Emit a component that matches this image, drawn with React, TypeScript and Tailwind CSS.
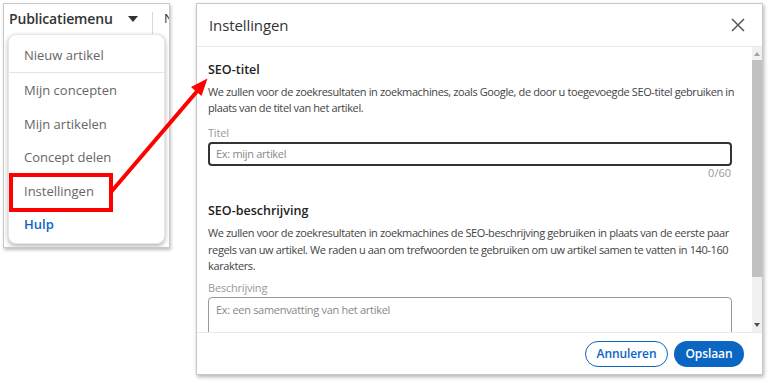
import React from "react";

const font = { fontFamily: '"Open Sans", "Noto Sans", sans-serif' };

function Caret() {
  return (
    <svg width="10" height="6" viewBox="0 0 10 6">
      <path d="M0 0 L10 0 L5 6 Z" fill="#333" />
    </svg>
  );
}

function LeftPanel() {
  const items = ["Mijn concepten", "Mijn artikelen", "Concept delen", "Instellingen"];
  return (
    <div className="w-[167px] h-[245px] border border-[#c8c8c8] bg-white shadow-[1px_2px_3px_rgba(0,0,0,0.25)] flex flex-col overflow-hidden shrink-0">
      <div className="h-[29px] flex items-end shrink-0">
        <div className="w-[148px] h-[29px] flex items-center pl-[5px] shrink-0">
          <span className="w-[119px] text-[14px] font-semibold text-[#333] leading-5 tracking-[-0.15px] whitespace-nowrap">Publicatiemenu</span>
          <Caret />
        </div>
        <div className="w-px h-[23px] bg-[#d8d8d8] shrink-0 mb-[-2px]"></div>
        <div className="h-[29px] flex items-center pl-[11px] text-[13px] text-[#333] shrink-0">N</div>
      </div>
      <div className="mt-px ml-[4px] w-[157px] h-[210px] rounded-[8px] bg-white border border-[#e6e6e6] shadow-[0_2px_5px_rgba(0,0,0,0.3)] flex flex-col shrink-0">
        <div className="h-[37px] pt-[10px] pl-[15px] text-[13px] leading-5 text-[#666]">Nieuw artikel</div>
        <div className="h-px bg-[#e4e4e4]"></div>
        <div className="pt-[1px] flex flex-col">
          {items.map((t) => (
            <div key={t} className="h-[33.5px] flex items-center pl-[15px] text-[13px] text-[#666]">
              {t}
            </div>
          ))}
          <div className="h-[33.5px] flex items-center pl-[15px] text-[13px] font-semibold text-[#0a66c2]">Hulp</div>
        </div>
      </div>
    </div>
  );
}

function Scrollbar() {
  return (
    <div className="w-[10px] bg-[#f1f1f1] flex flex-col items-center shrink-0">
      <div className="h-[13px] flex items-center justify-center">
        <svg width="6" height="4" viewBox="0 0 6 4"><path d="M0 4 L6 4 L3 0 Z" fill="#a3a3a3" /></svg>
      </div>
      <div className="w-[10px] h-[217px] bg-[#c1c1c1]"></div>
      <div className="flex-1"></div>
      <div className="h-[14px] flex items-center justify-center">
        <svg width="6" height="4" viewBox="0 0 6 4"><path d="M0 0 L6 0 L3 4 Z" fill="#505050" /></svg>
      </div>
    </div>
  );
}

const para = "mr-[-4px] text-[11px] tracking-[-0.38px] text-[#444]";

function Modal() {
  return (
    <div className="w-[567px] h-[372px] border border-[#c8c8c8] bg-white shadow-[1px_2px_4px_rgba(0,0,0,0.3)] flex flex-col shrink-0">
      <div className="h-[43px] flex items-center justify-between pl-[12px] pr-[17px] border-b border-[#e8e8e8] shrink-0">
        <span className="text-[15px] text-[#333] tracking-[-0.1px]">Instellingen</span>
        <svg width="14" height="14" viewBox="0 0 14 14">
          <path d="M1 1 L13 13 M13 1 L1 13" stroke="#555" strokeWidth="1.5" />
        </svg>
      </div>
      <div className="flex-1 flex min-h-0">
        <div className="flex-1 pl-[11px] pr-[20px] overflow-hidden">
          <div className="pt-[13px] text-[12.5px] font-semibold leading-5 text-[#222]">SEO-titel</div>
          <p className={`mt-[4px] leading-4 ${para}`}>
            We zullen voor de zoekresultaten in zoekmachines, zoals Google, de door u toegevoegde SEO-titel gebruiken in plaats van de titel van het artikel.
          </p>
          <div className="mt-[9px] text-[11px] tracking-[-0.2px] leading-4 text-[#999]">Titel</div>
          <div className="mt-[1px] h-[24px] border-2 border-[#333] rounded-[4px] flex items-center pl-[6px] text-[11px] tracking-[-0.3px] text-[#888]">
            Ex: mijn artikel
          </div>
          <div className="text-right text-[11px] leading-[14px] text-[#999] pr-[1px]">0/60</div>
          <div className="mt-[21px] text-[12.5px] font-semibold leading-5 text-[#222]">SEO-beschrijving</div>
          <p className={`mt-[4px] leading-[16.5px] ${para}`}>
            We zullen voor de zoekresultaten in zoekmachines de SEO-beschrijving gebruiken in plaats van de eerste paar regels van uw artikel. We raden u aan om trefwoorden te gebruiken om uw artikel samen te vatten in 140-160 karakters.
          </p>
          <div className="mt-[5px] text-[11px] tracking-[-0.2px] leading-4 text-[#999]">Beschrijving</div>
          <div className="mt-[1px] h-[60px] border border-[#999] rounded-[4px] pl-[7px] pt-[4px] text-[11px] tracking-[-0.3px] text-[#888]">
            Ex: een samenvatting van het artikel
          </div>
        </div>
        <Scrollbar />
      </div>
      <div className="h-[42px] border-t border-[#e8e8e8] flex items-center justify-end gap-[6px] pr-[18px] shrink-0">
        <button className="h-[26px] w-[83px] rounded-full border border-[#0a66c2] text-[#0a66c2] text-[12px] font-semibold tracking-[-0.1px]">Annuleren</button>
        <button className="h-[26px] w-[70px] rounded-full bg-[#0a66c2] text-white text-[12px] font-semibold tracking-[-0.1px]">Opslaan</button>
      </div>
    </div>
  );
}

export default function App() {
  return (
    <div className="relative w-[770px] h-[383px] bg-white overflow-hidden" style={font}>
      <div className="flex items-start gap-[26px] pl-[3px] pt-[3px]">
        <LeftPanel />
        <Modal />
      </div>
      <svg className="absolute left-0 top-0 pointer-events-none" width="770" height="383">
        <rect x="11" y="175" width="100" height="35" fill="none" stroke="#f00" strokeWidth="4" />
        <line x1="111" y1="192" x2="199" y2="89" stroke="#f00" strokeWidth="4" />
        <polygon points="207.5,78.5 191,87 201.5,96" fill="#f00" />
      </svg>
    </div>
  );
}
